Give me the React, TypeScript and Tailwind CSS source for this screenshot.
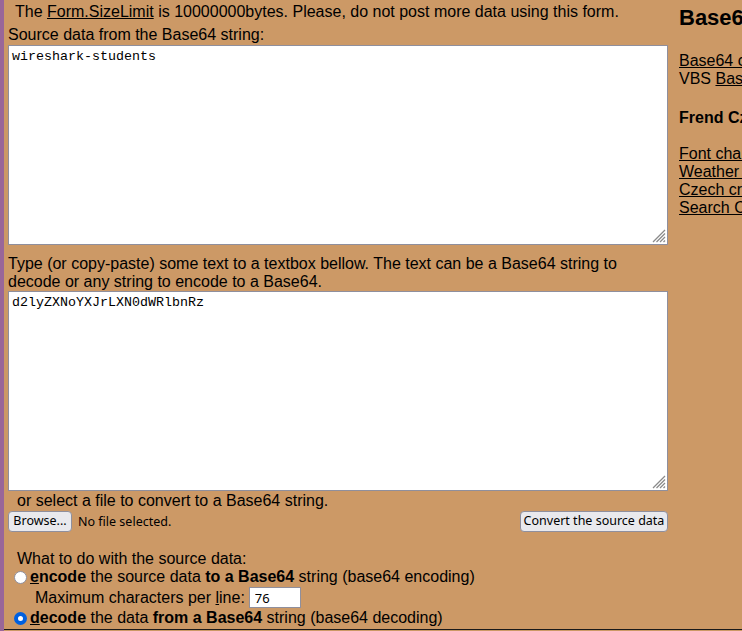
import React from 'react';

const Grip: React.FC = () => (
  <svg className="absolute right-[2px] bottom-[2px]" width="14" height="14" viewBox="0 0 14 14">
    <g stroke="#8a8a8a" strokeWidth="1.2">
      <line x1="13" y1="1" x2="1" y2="13" />
      <line x1="13" y1="4.5" x2="4.5" y2="13" />
      <line x1="13" y1="8" x2="8" y2="13" />
      <line x1="13" y1="11.5" x2="11.5" y2="13" />
    </g>
  </svg>
);

const Area: React.FC<{ value: string }> = ({ value }) => (
  <div className="relative w-[660px] h-[200px]">
    <textarea
      readOnly
      value={value}
      className="w-full h-full resize-none bg-white border border-[#8f8f9d] px-[3px] py-[3px] font-['Liberation_Mono',monospace] text-[13.33px] leading-[15px] outline-none"
    />
    <Grip />
  </div>
);

const Radio: React.FC<{ checked?: boolean }> = ({ checked }) =>
  checked ? (
    <span className="w-[13px] h-[13px] rounded-full border-[4px] border-[#0060df] bg-white shrink-0" />
  ) : (
    <span className="w-[13px] h-[13px] rounded-full border border-[#8f8f9d] bg-white shrink-0" />
  );

const App: React.FC = () => {
  const friends = ['Font charset converter', 'Weather forecast', 'Czech crossword', 'Search Czech'];

  return (
    <div className="w-[742px] h-[631px] overflow-hidden bg-[#cc9966] flex font-['Liberation_Sans',Arial,sans-serif] text-[16px] leading-[18px] text-black">
      <div className="w-[4px] shrink-0 bg-[#996699]" />
      <div className="flex flex-col">
        <div className="flex">
          <div className="w-[664px] shrink-0 pl-[4px]">
            <p className="pt-[3px] pl-[7px] whitespace-nowrap">
              The <u>Form.SizeLimit</u> is 10000000bytes. Please, do not post more data using this form.
            </p>
            <p className="mt-[5px]">Source data from the Base64 string:</p>
            <div className="mt-[1px]">
              <Area value="wireshark-students" />
            </div>
            <p className="mt-[10px] w-[620px]">
              Type (or copy-paste) some text to a textbox bellow. The text can be a Base64 string to decode or any string to encode to a Base64.
            </p>
            <Area value="d2lyZXNoYXJrLXN0dWRlbnRz" />
            <p className="mt-[1px] pl-[9px]">or select a file to convert to a Base64 string.</p>
            <div className="mt-[1px] h-[21px] w-[660px] flex justify-between items-center font-['Noto_Sans',sans-serif] text-[12.5px]">
              <div className="flex items-center">
                <button className="h-[21px] w-[64px] bg-[#e9e9ed] border border-[#8f8f9d] rounded-[4px] leading-none">
                  Browse...
                </button>
                <span className="ml-[6px]">No file selected.</span>
              </div>
              <button className="h-[21px] w-[148px] bg-[#e9e9ed] border border-[#8f8f9d] rounded-[4px] leading-none">
                Convert the source data
              </button>
            </div>
            <p className="mt-[18px] pl-[9px]">What to do with the source data:</p>
            <div className="flex items-center h-[18px] pl-[6px]">
              <Radio />
              <span className="ml-[3px]">
                <b><u>e</u>ncode</b> the source data <b>to a Base64</b> string (base64 encoding)
              </span>
            </div>
            <div className="mt-[1px] h-[21px] flex items-center pl-[27px]">
              <span>
                Maximum characters per <u>l</u>ine:
              </span>
              <input
                readOnly
                value="76"
                className="ml-[4px] h-[21px] w-[52px] bg-white border border-[#8f8f9d] px-[5px] font-['Noto_Sans',sans-serif] text-[13px] outline-none"
              />
            </div>
            <div className="mt-[1px] flex items-center h-[18px] pl-[6px]">
              <Radio checked />
              <span className="ml-[3px]">
                <b><u>d</u>ecode</b> the data <b>from a Base64</b> string (base64 decoding)
              </span>
            </div>
          </div>
          <div className="ml-[11px] whitespace-nowrap">
            <h2 className="pt-[5px] text-[22px] leading-[26px] font-bold">Base64 online</h2>
            <div className="mt-[21px]">
              <div><u>Base64 converter</u></div>
              <div>VBS <u>Base64 encode/decode</u></div>
            </div>
            <p className="mt-[21px] font-bold">Frend Czech sites</p>
            <div className="mt-[18px]">
              {friends.map((f) => (
                <div key={f}>
                  <u>{f}</u>
                </div>
              ))}
            </div>
          </div>
        </div>
        <div className="mt-[2px] h-[1px] w-[738px] bg-[#1a1a1a]" />
      </div>
    </div>
  );
};

export default App;
